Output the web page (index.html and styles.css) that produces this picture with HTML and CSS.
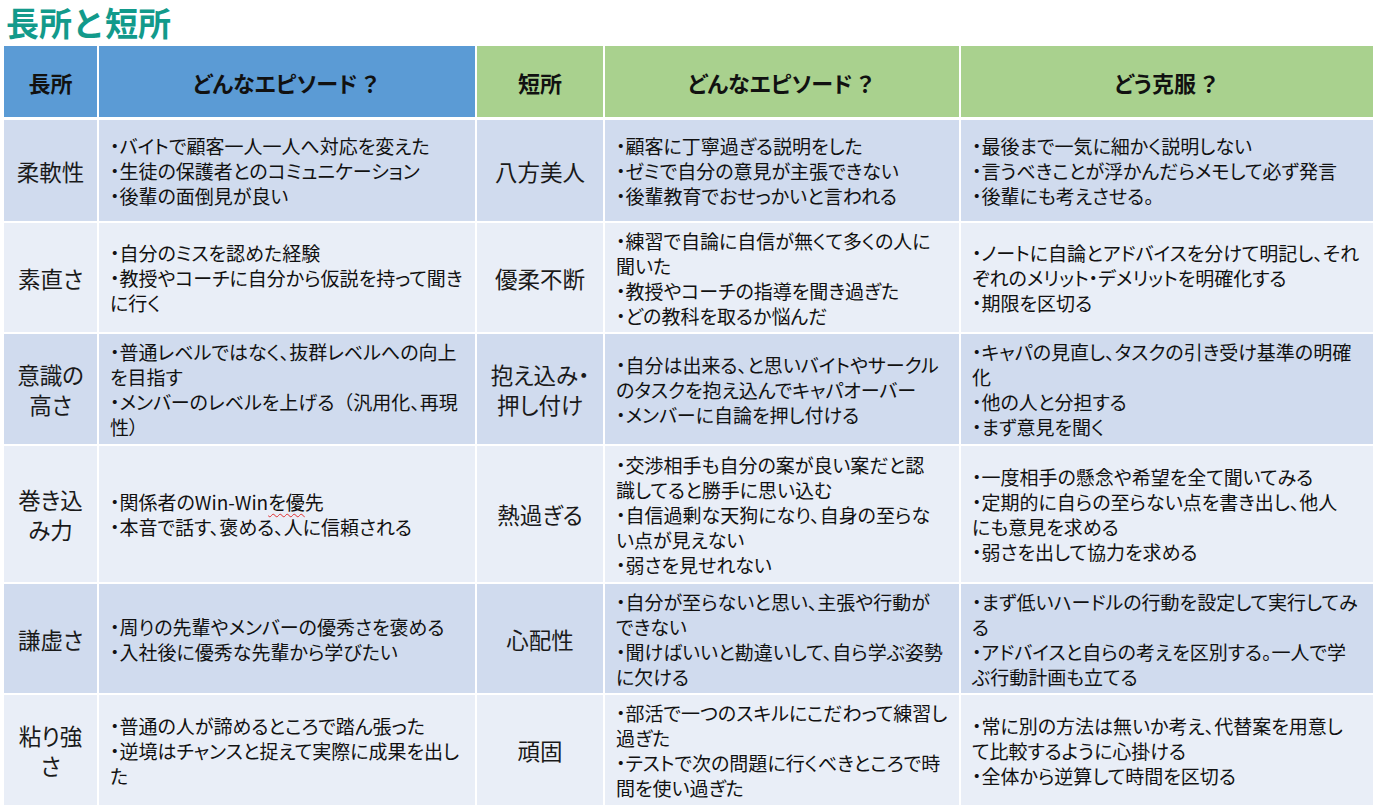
FILE: index.html
```html
<!DOCTYPE html>
<html lang="ja">
<head>
<meta charset="utf-8">
<title>長所と短所</title>
<link rel="stylesheet" href="styles.css">
</head>
<body>
<h1 class="title">長所と短所</h1>
<div class="table">
  <div class="cell head blue">長所</div>
  <div class="cell head blue">どんなエピソード<span class="q">？</span></div>
  <div class="cell head green">短所</div>
  <div class="cell head green">どんなエピソード<span class="q">？</span></div>
  <div class="cell head green">どう克服<span class="q">？</span></div>

  <div class="cell label dark">柔軟性</div>
  <div class="cell body dark"><p>・バイトで顧客一人一人へ対応を変えた<br>・生徒の保護者とのコミュニケーション<br>・後輩の面倒見が良い</p></div>
  <div class="cell label dark">八方美人</div>
  <div class="cell body dark"><p>・顧客に丁寧過ぎる説明をした<br>・ゼミで自分の意見が主張できない<br>・後輩教育でおせっかいと言われる</p></div>
  <div class="cell body dark"><p>・最後まで一気に細かく説明しない<br>・言うべきことが浮かんだらメモして必ず発言<br>・後輩にも考えさせる。</p></div>

  <div class="cell label light">素直さ</div>
  <div class="cell body light"><p>・自分のミスを認めた経験<br>・教授やコーチに自分から仮説を持って聞き<br>に行く</p></div>
  <div class="cell label light">優柔不断</div>
  <div class="cell body light"><p>・練習で自論に自信が無くて多くの人に<br>聞いた<br>・教授やコーチの指導を聞き過ぎた<br>・どの教科を取るか悩んだ</p></div>
  <div class="cell body light"><p>・ノートに自論とアドバイスを分けて明記し、それ<br>ぞれのメリット・デメリットを明確化する<br>・期限を区切る</p></div>

  <div class="cell label dark">意識の<br>高さ</div>
  <div class="cell body dark"><p>・普通レベルではなく、抜群レベルへの向上<br>を目指す<br>・メンバーのレベルを上げる<span class="paren">（</span>汎用化、再現<br>性）</p></div>
  <div class="cell label dark">抱え込み・<br>押し付け</div>
  <div class="cell body dark"><p>・自分は出来る、と思いバイトやサークル<br>のタスクを抱え込んでキャパオーバー<br>・メンバーに自論を押し付ける</p></div>
  <div class="cell body dark"><p>・キャパの見直し、タスクの引き受け基準の明確<br>化<br>・他の人と分担する<br>・まず意見を聞く</p></div>

  <div class="cell label light">巻き込<br>み力</div>
  <div class="cell body light"><p>・関係者のWin-Win<span class="spell">を優</span>先<br>・本音で話す、褒める、人に信頼される</p></div>
  <div class="cell label light">熱過ぎる</div>
  <div class="cell body light"><p>・交渉相手も自分の案が良い案だと認<br>識してると勝手に思い込む<br>・自信過剰な天狗になり、自身の至らな<br>い点が見えない<br>・弱さを見せれない</p></div>
  <div class="cell body light"><p>・一度相手の懸念や希望を全て聞いてみる<br>・定期的に自らの至らない点を書き出し、他人<br>にも意見を求める<br>・弱さを出して協力を求める</p></div>

  <div class="cell label dark">謙虚さ</div>
  <div class="cell body dark"><p>・周りの先輩やメンバーの優秀さを褒める<br>・入社後に優秀な先輩から学びたい</p></div>
  <div class="cell label dark">心配性</div>
  <div class="cell body dark"><p>・自分が至らないと思い、主張や行動が<br>できない<br>・聞けばいいと勘違いして、自ら学ぶ姿勢<br>に欠ける</p></div>
  <div class="cell body dark"><p>・まず低いハードルの行動を設定して実行してみ<br>る<br>・アドバイスと自らの考えを区別する。一人で学<br>ぶ行動計画も立てる</p></div>

  <div class="cell label light">粘り強<br>さ</div>
  <div class="cell body light"><p>・普通の人が諦めるところで踏ん張った<br>・逆境はチャンスと捉えて実際に成果を出し<br>た</p></div>
  <div class="cell label light">頑固</div>
  <div class="cell body light"><p>・部活で一つのスキルにこだわって練習し<br>過ぎた<br>・テストで次の問題に行くべきところで時<br>間を使い過ぎた</p></div>
  <div class="cell body light"><p>・常に別の方法は無いか考え、代替案を用意し<br>て比較するように心掛ける<br>・全体から逆算して時間を区切る</p></div>
</div>
</body>
</html>
```

FILE: styles.css
```css
html, body {
  margin: 0;
  padding: 0;
  background: #ffffff;
}

body {
  width: 1376px;
  height: 808px;
  overflow: hidden;
  font-family: "Noto Sans CJK JP", "Noto Sans", sans-serif;
  font-feature-settings: "palt";
  color: #111111;
}

.title {
  margin: 0;
  padding-left: 6px;
  height: 46px;
  line-height: 44px;
  font-size: 33px;
  font-weight: 700;
  color: #129a8b;
  font-feature-settings: normal;
}

.table {
  margin-left: 4px;
  display: grid;
  grid-template-columns: 93px 376px 126px 354px 412px;
  grid-template-rows: 72px 101px 109px 110px 136px 109px 110px;
  column-gap: 2px;
  row-gap: 2px;
}

.cell {
  display: flex;
  align-items: center;
  min-width: 0;
}

.head {
  justify-content: center;
  font-size: 22px;
  font-weight: 700;
  color: #111111;
  margin-bottom: 1px;
}

.q {
  font-feature-settings: normal;
  padding-left: 2px;
}

.paren {
  font-feature-settings: normal;
}

.blue { background: #5b9bd5; }
.green { background: #a9d18e; }
.dark { background: #d0dbee; }
.light { background: #e9eef7; }

.label {
  justify-content: center;
  text-align: center;
  font-size: 22.5px;
  line-height: 30px;
  color: #1a1a1a;
}

.body {
  padding-left: 11px;
  font-size: 19px;
  line-height: 25px;
}

.body p {
  margin: 0;
  white-space: nowrap;
}

.spell {
  text-decoration: underline wavy #e03030;
  text-decoration-thickness: 1px;
  text-underline-offset: 3px;
}
```
